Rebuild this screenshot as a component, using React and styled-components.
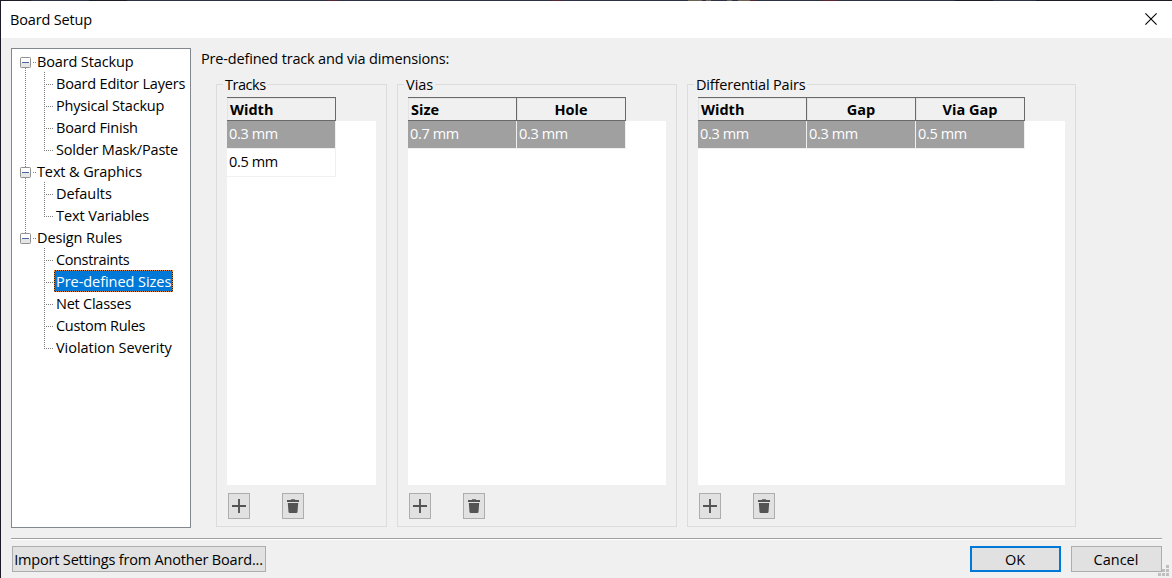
import React from 'react';
import styled, { createGlobalStyle, css } from 'styled-components';

const GlobalStyle = createGlobalStyle`
  * { box-sizing: border-box; }
  body { margin: 0; background: #f0f0f0; }
`;

const face = '#f0f0f0';
const dotsDown = 'repeating-linear-gradient(to bottom, #808080 0 1px, transparent 1px 2px)';
const dotsAcross = 'repeating-linear-gradient(to right, #808080 0 1px, transparent 1px 2px)';

const Dialog = styled.div`
  width: 1172px;
  height: 578px;
  overflow: hidden;
  display: flex;
  flex-direction: column;
  background: ${face};
  border-left: 1px solid #1b1b27;
  color: #000;
  font-family: 'Open Sans', 'Noto Sans', sans-serif;
  font-size: 14.5px;
  line-height: 20px;
  white-space: nowrap;
`;

const TopEdge = styled.div`
  flex: none;
  height: 1px;
  background: linear-gradient(
    to right,
    #1c1c26 0 30px, #2b3145 30px 88px, #1c1c26 88px 126px, #2b3145 126px 327px,
    #5a2630 327px 337px, #2b3145 337px 551px, #5a2630 551px 560px, #2b3145 560px 687px,
    #6b6455 687px 701px, #2b3145 701px 705px, #6b6455 705px 710px, #2b3145 710px 726px,
    #6b6455 726px 731px, #2b3145 731px 737px, #6b6455 737px 749px, #5a2630 749px 754px,
    #2b3145 754px 821px, #5a2630 821px 837px, #2b3145 837px 954px, #1c1c26 954px 992px,
    #2b3145 992px 1035px, #1c1c26 1035px
  );
`;

const TitleBar = styled.header`
  flex: none;
  height: 37px;
  padding: 0 15px 0 9px;
  display: flex;
  align-items: center;
  justify-content: space-between;
  background: #fff;
  svg { display: block; margin-bottom: 1px; }
`;

const Label = styled.span`
  letter-spacing: ${(p) => p.$spacing || 0}px;
`;

const Main = styled.main`
  display: flex;
  flex: none;
  height: 500px;
  padding: 10px 0 0 10px;
`;

const Tree = styled.nav`
  width: 180px;
  height: 480px;
  padding: 1px 0 0 8px;
  border: 1px solid #828790;
  background: #fff;
`;

const TreeRow = styled.div`
  display: flex;
  align-items: center;
  height: 22px;
`;

const Toggle = styled.span`
  width: 16px;
  height: 22px;
  padding-top: 7px;
  flex: none;
  background: ${dotsAcross} 13px 12px / 3px 1px no-repeat
    ${(p) => p.$above && css`, ${dotsDown} 5px 0 / 1px 7px no-repeat`}
    ${(p) => p.$below && css`, ${dotsDown} 5px 18px / 1px 4px no-repeat`};
  svg { display: block; }
`;

const Branch = styled.span`
  width: 34px;
  height: 22px;
  flex: none;
  background: ${dotsAcross} 24px 12px / 9px 1px no-repeat,
    ${dotsDown} 24px 0 / 1px ${(p) => (p.$last ? 13 : 22)}px no-repeat
    ${(p) => p.$trunk && css`, ${dotsDown} 5px 0 / 1px 22px no-repeat`};
`;

const NodeName = styled.span`
  height: 22px;
  line-height: 24px;
  flex: none;
  letter-spacing: ${(p) => p.$spacing}px;
  padding-left: ${(p) => (p.$root ? 1 : 2)}px;
  ${(p) => p.$selected && css`
    width: 119px;
    background: #0078d7;
    color: #fff;
    outline: 1px dotted #e08a3a;
    outline-offset: -1px;
    box-shadow: inset 0 0 0 1px #10202e;
  `}
`;

const Page = styled.section`
  padding-left: 10px;
`;

const Intro = styled.p`
  margin: 0;
  height: 36px;
  padding-top: 1px;
  letter-spacing: -0.17px;
`;

const Groups = styled.div`
  display: flex;
  gap: 10px;
  padding-left: 15px;
`;

const Group = styled.section`
  width: ${(p) => p.$width}px;
  height: 443px;
  display: flex;
  flex-direction: column;
  padding: 0 10px;
  border: 1px solid #dcdcdc;
`;

const GroupTitle = styled.h2`
  align-self: flex-start;
  width: ${(p) => p.$width}px;
  height: 20px;
  margin: -10px 0 2px -4px;
  padding-left: 2px;
  background: ${face};
  font: inherit;
  letter-spacing: ${(p) => p.$spacing}px;
`;

const Sheet = styled.div`
  height: 388px;
  flex: none;
  background: #fff;
`;

const SheetHead = styled.div`
  display: flex;
  height: 24px;
  background: ${face};
`;

const HeadCell = styled.div`
  width: 109px;
  height: 24px;
  padding-left: ${(p) => (p.$first ? 3 : 0)}px;
  border: solid #696969;
  border-width: 1px 1px 1px 0;
  box-shadow: inset 1px 1px 0 #e3e3e3;
  font-weight: 700;
  line-height: 24px;
  text-align: ${(p) => (p.$first ? 'left' : 'center')};
`;

const SheetRow = styled.div`
  display: flex;
`;

const Cell = styled.div`
  width: 109px;
  height: 28px;
  padding-left: 2px;
  border: solid ${face};
  border-width: 0 1px 1px 0;
  background: ${(p) => (p.$selected ? '#a0a0a0' : '#fff')};
  color: ${(p) => (p.$selected ? '#fff' : '#000')};
  line-height: 26px;
  letter-spacing: -0.35px;
`;

const Tools = styled.div`
  display: flex;
  gap: 32px;
  padding: 8px 0 0 1px;
`;

const ToolButton = styled.button`
  width: 22px;
  height: 26px;
  padding: 0;
  display: flex;
  align-items: center;
  justify-content: center;
  border: 1px solid #adadad;
  background: #e1e1e1;
`;

const Divider = styled.div`
  flex: none;
  height: 2px;
  margin: 0 10px;
  border-top: 1px solid #a0a0a0;
  background: #fff;
`;

const Footer = styled.footer`
  position: relative;
  display: flex;
  gap: 10px;
  padding: 6px 10px 0 11px;
`;

const PushButton = styled.button`
  width: ${(p) => p.$width}px;
  height: 26px;
  padding: 2px 1px 0 0;
  border: ${(p) => (p.$primary ? '2px solid #0078d7' : '1px solid #adadad')};
  background: #e1e1e1;
  color: #000;
  font: inherit;
  line-height: 20px;
  letter-spacing: ${(p) => p.$spacing || 0}px;
  margin-right: ${(p) => (p.$push ? 'auto' : 0)};
`;

const Grip = styled.svg`
  position: absolute;
  right: 3px;
  top: 25px;
`;

const CloseIcon = () => (
  <svg width="12" height="12" viewBox="0 0 12 12" aria-label="Close">
    <path d="M0.4 0.4 L11.6 11.6 M11.6 0.4 L0.4 11.6" stroke="#000" strokeWidth="1.1" fill="none" />
  </svg>
);

const MinusBox = () => (
  <svg width="11" height="11" viewBox="0 0 11 11">
    <rect x="0.5" y="0.5" width="10" height="10" rx="0.8" fill="#fff" stroke="#919191" />
    <rect x="1" y="6" width="9" height="4" fill="#e6e6e6" />
    <rect x="2" y="5" width="7" height="1" fill="#4b63a7" />
  </svg>
);

const PlusIcon = () => (
  <svg width="14" height="14" viewBox="0 0 14 14">
    <path d="M0 7H14M7 0V14" stroke="#545454" strokeWidth="1.9" />
  </svg>
);

const TrashIcon = () => (
  <svg width="12" height="14" viewBox="0 0 12 14">
    <path d="M0 1.1H3.7L4.3 0.2H7.7L8.3 1.1H12V3H0Z M0.8 4.1H11.2L10.5 13Q10.3 14 9.4 14H2.6Q1.7 14 1.5 13Z" fill="#545454" />
  </svg>
);

const tree = [
  { name: 'Board Stackup', spacing: -0.14, items: [
    ['Board Editor Layers', -0.19], ['Physical Stackup', -0.2],
    ['Board Finish', -0.2], ['Solder Mask/Paste', -0.17],
  ] },
  { name: 'Text & Graphics', spacing: -0.12, items: [['Defaults', -0.06], ['Text Variables', -0.1]] },
  { name: 'Design Rules', spacing: -0.1, items: [
    ['Constraints', -0.38], ['Pre-defined Sizes', -0.05], ['Net Classes', -0.24],
    ['Custom Rules', -0.28], ['Violation Severity', -0.04],
  ] },
];

const groups = [
  { title: 'Tracks', width: 171, titleWidth: 44, spacing: -0.45, columns: ['Width'], rows: [['0.3 mm'], ['0.5 mm']] },
  { title: 'Vias', width: 280, titleWidth: 31, spacing: 0, columns: ['Size', 'Hole'], rows: [['0.7 mm', '0.3 mm']] },
  { title: 'Differential Pairs', width: 389, titleWidth: 113, spacing: -0.18, columns: ['Width', 'Gap', 'Via Gap'], rows: [['0.3 mm', '0.3 mm', '0.5 mm']] },
];

function SizeGroup({ group }) {
  return (
    <Group $width={group.width}>
      <GroupTitle $width={group.titleWidth} $spacing={group.spacing}>{group.title}</GroupTitle>
      <Sheet>
        <SheetHead>
          {group.columns.map((c, i) => <HeadCell key={c} $first={i === 0}>{c}</HeadCell>)}
        </SheetHead>
        {group.rows.map((row, r) => (
          <SheetRow key={r}>
            {row.map((value, i) => <Cell key={i} $selected={r === 0}>{value}</Cell>)}
          </SheetRow>
        ))}
      </Sheet>
      <Tools>
        <ToolButton aria-label="Add"><PlusIcon /></ToolButton>
        <ToolButton aria-label="Delete"><TrashIcon /></ToolButton>
      </Tools>
    </Group>
  );
}

export default function App() {
  return (
    <>
      <GlobalStyle />
      <Dialog>
        <TopEdge />
        <TitleBar>
          <Label $spacing={-0.15}>Board Setup</Label>
          <CloseIcon />
        </TitleBar>
        <Main>
          <Tree>
            {tree.map((branch, b) => (
              <React.Fragment key={branch.name}>
                <TreeRow>
                  <Toggle $above={b > 0} $below={b < tree.length - 1}><MinusBox /></Toggle>
                  <NodeName $root $spacing={branch.spacing}>{branch.name}</NodeName>
                </TreeRow>
                {branch.items.map(([name, spacing], i) => (
                  <TreeRow key={name}>
                    <Branch $last={i === branch.items.length - 1} $trunk={b < tree.length - 1} />
                    <NodeName $spacing={spacing} $selected={name === 'Pre-defined Sizes'}>{name}</NodeName>
                  </TreeRow>
                ))}
              </React.Fragment>
            ))}
          </Tree>
          <Page>
            <Intro>Pre-defined track and via dimensions:</Intro>
            <Groups>
              {groups.map((g) => <SizeGroup key={g.title} group={g} />)}
            </Groups>
          </Page>
        </Main>
        <Divider />
        <Footer>
          <PushButton $width={254} $spacing={-0.18} $push>Import Settings from Another Board...</PushButton>
          <PushButton $width={91} $primary>OK</PushButton>
          <PushButton $width={91}>Cancel</PushButton>
          <Grip width="11" height="11" viewBox="0 0 11 11">
            <path d="M8 0h3v3h-3zM4 4h3v3h-3zM8 4h3v3h-3zM0 8h3v3h-3zM4 8h3v3h-3zM8 8h3v3h-3z" fill="#bfbfbf" />
          </Grip>
        </Footer>
      </Dialog>
    </>
  );
}
